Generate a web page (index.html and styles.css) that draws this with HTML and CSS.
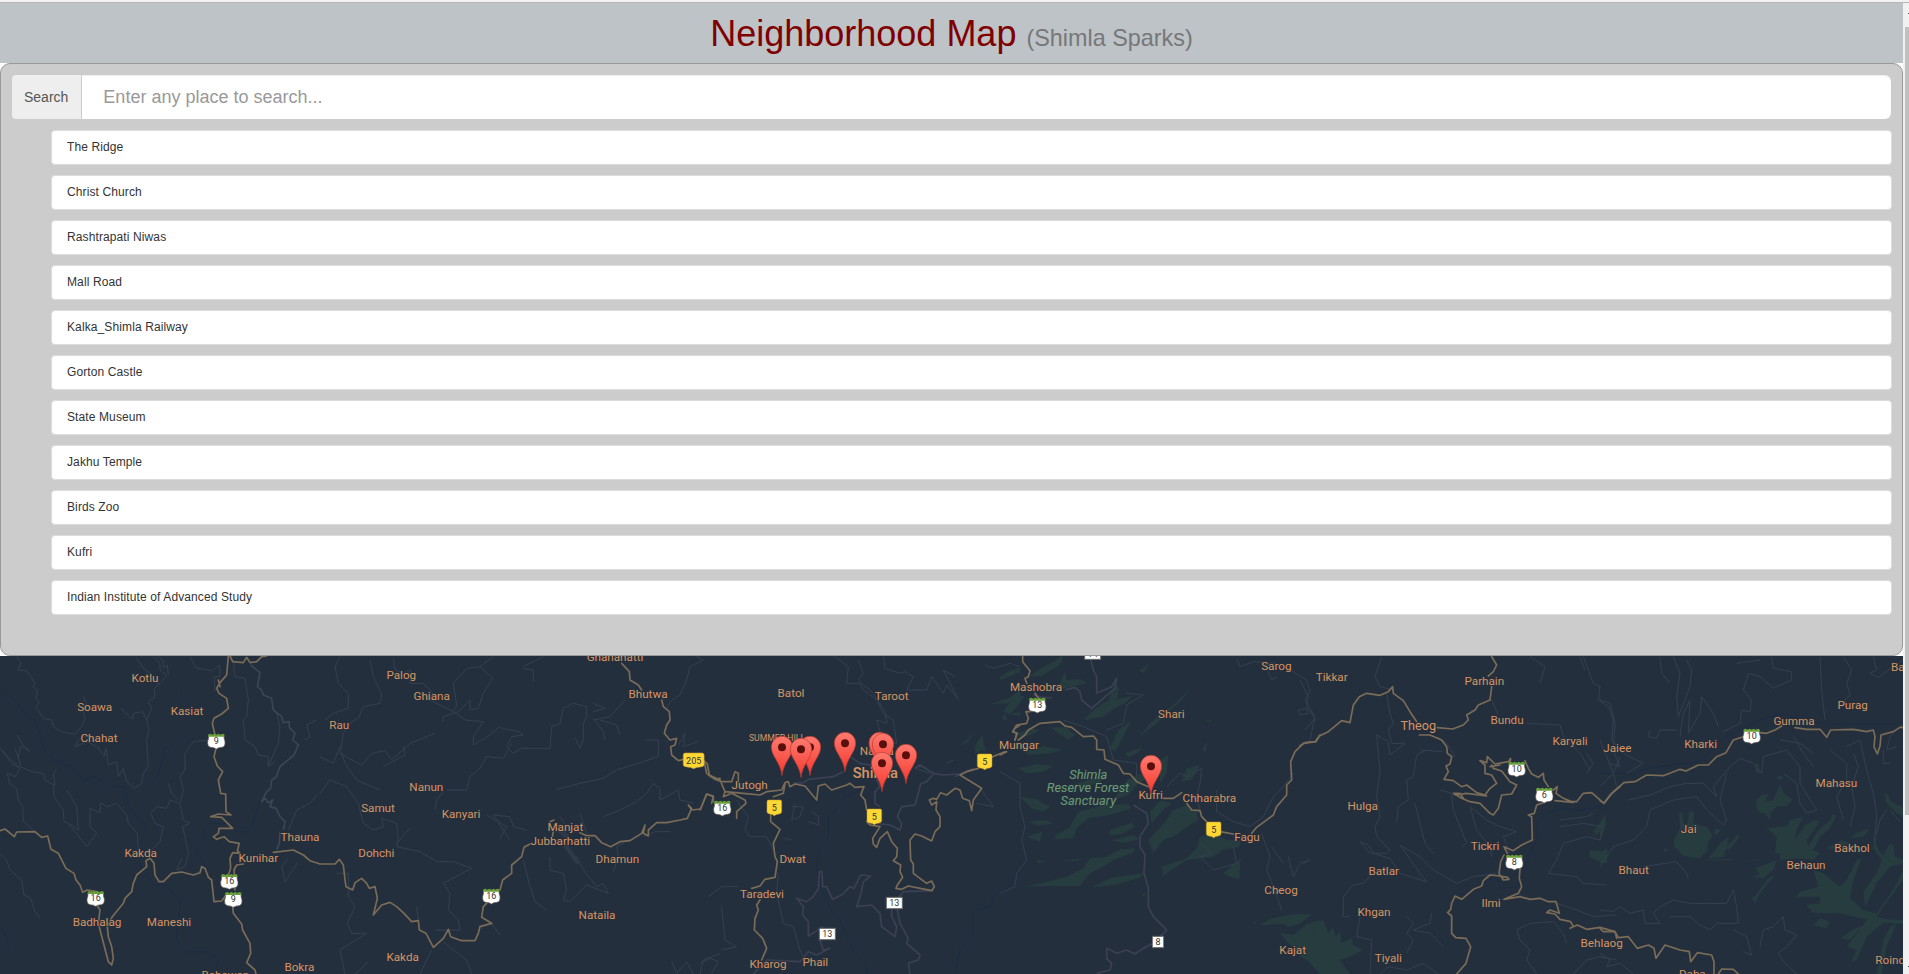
FILE: index.html
```html
<!DOCTYPE html>
<html lang="en">
<head>
<meta charset="utf-8">
<title>Neighborhood Map</title>
<link rel="stylesheet" href="styles.css">
</head>
<body>
<div class="window-edge"></div>
<div class="viewport">
<main class="page">
  <header class="masthead"><h1>Neighborhood Map <small>(Shimla Sparks)</small></h1></header>
  <section class="panel">
    <div class="search">
      <label class="search-label" for="q">Search</label>
      <input class="search-input" id="q" type="text" placeholder="Enter any place to search...">
    </div>
    <ul class="places">
      <li>The Ridge</li>
      <li>Christ Church</li>
      <li>Rashtrapati Niwas</li>
      <li>Mall Road</li>
      <li>Kalka_Shimla Railway</li>
      <li>Gorton Castle</li>
      <li>State Museum</li>
      <li>Jakhu Temple</li>
      <li>Birds Zoo</li>
      <li>Kufri</li>
      <li>Indian Institute of Advanced Study</li>
    </ul>
  </section>
  <div class="map-frame">
  <svg class="map" viewBox="0 48 5709 954" width="1903" height="318">
    <defs>
      <linearGradient id="pinFill" x1="0" y1="0" x2="0" y2="1"><stop offset="0" stop-color="#ff7a6f"/><stop offset="1" stop-color="#f4382e"/></linearGradient>
      <g id="pin"><path class="pin-body" d="M0,0 C-4,-40 -32,-58 -32,-86 A32,32 0 0 1 32,-86 C32,-58 4,-40 0,0Z"/><circle class="pin-dot" cy="-85" r="12"/></g>
      <g id="state"><path class="shield-white" d="M-23,-17 H23 Q22,-8 26,2 Q27,17 17,19 Q6,19 0,24 Q-6,19 -17,19 Q-27,17 -26,2 Q-22,-8 -23,-17Z"/><path class="shield-green" d="M-24,-13 V-20 L-18,-22 L-12,-19 L-6,-22 L0,-19 L6,-22 L12,-19 L18,-22 L24,-20 V-13Z"/></g>
      <g id="national"><path class="shield-yellow" d="M-18,-23 H18 Q22,-22 22,-18 V12 Q22,18 14,19 Q5,20 0,24 Q-5,20 -14,19 Q-22,18 -22,12 V-18 Q-22,-22 -18,-23Z"/></g>
      <g id="district"><rect class="shield-box" x="-24" y="-17" width="48" height="34"/></g>
    </defs>

    <!-- forests -->
    <g class="forest">
      <g transform="translate(2100,0)">
        <path d="M935,92 L960,82 V98 L920,100Z M870,192 L925,175 L960,150 V172 L930,190Z M905,238 L915,218 L920,240Z M925,222 L960,216 V228Z M825,320 L835,300 L848,286 L852,315 L860,335 L845,330 L826,342Z M780,318 L832,270 L800,308Z"/>
      </g>
      <g transform="translate(3000,0)">
        <path d="M0,110 L30,92 L70,84 L35,108 L0,120Z M90,108 L130,80 L165,62 L180,50 H190 L180,75 L150,92 L125,108Z M170,150 L195,95 L200,120 L245,118 L260,130 L225,138Z M10,215 L45,165 L75,168 L55,195 L30,222Z M250,240 L285,205 L325,180 L345,130 L358,145 L350,178 L398,168 L375,190 L345,205 L310,230Z M418,92 L450,70 L430,100Z"/>
        <path d="M330,325 L355,270 L395,240 L370,290 L345,335Z M410,300 L450,250 L520,195 L577,142 L540,185 L500,220 L465,255 L435,275Z M375,340 L425,322 L415,338 L385,352Z M480,360 L505,345 L500,400 L480,430Z M560,385 L600,375 L575,420 L545,425Z M606,330 L622,302 L618,335Z M55,280 L95,265 L120,272 L90,285 L60,290Z M150,262 L200,262 L225,285 L205,300 L175,280Z M615,242 L635,240 L632,246Z"/>
        <path d="M70,335 L130,318 L190,330 L150,340 L90,345Z M55,385 L110,372 L160,378 L130,395 L80,400Z M60,470 L110,478 L150,500 L130,515 L95,505Z M85,545 L140,540 L160,552 L110,556Z M80,590 L128,575 L120,605Z M165,588 L210,560 L235,515 L310,495 L385,492 L395,505 L330,525 L265,535 L230,565 L220,595 L165,598Z M330,570 L395,548 L405,560 L365,582 L330,585Z M340,480 L380,420 L420,402 L455,408 L415,430 L385,465Z M230,430 L300,410 L310,420 L250,445Z"/>
        <path d="M70,740 L130,728 L205,708 L250,685 L270,655 L320,650 L360,628 L405,625 L400,638 L340,660 L310,680 L270,700 L240,738 L150,738Z M275,742 L330,715 L390,705 L435,700 L415,715 L345,735Z M335,602 L400,585 L420,597 L375,608Z M425,765 L437,755 L436,768Z M445,600 L500,540 L520,510 L560,495 L590,515 L595,540 L560,560 L530,585 L490,600 L460,640Z M448,735 L490,705 L485,680 L560,655 L590,625 L600,590 L640,580 L680,600 L722,602 L718,620 L665,630 L640,650 L560,660 L515,690Z M670,700 L722,655 L718,718 L695,712Z M450,515 L480,482 L515,488 L485,515 L455,550Z M110,670 L112,660 L140,664Z M180,665 L240,655 L235,662Z"/>
        <path d="M778,855 L815,835 L880,822 L935,824 L900,850 L868,862 L850,852Z M840,880 L880,885 L920,852 L960,840 V1002 L930,970 L905,935 L870,915Z M760,848 L770,842 L765,855Z"/>
      </g>
      <g transform="translate(3900,0)">
        <path d="M0,822 L35,824 L0,850Z M0,912 L30,890 L50,850 L70,840 L85,880 L98,862 L108,890 L120,870 L124,910 L155,895 L160,915 L190,930 L150,950 L120,960 L150,1002 H60 L30,965 L0,950Z M870,630 L920,635 L922,670 L890,662 L868,650Z M880,575 L918,522 L912,560 L890,585Z"/>
      </g>
      <g transform="translate(4800,0)">
        <path d="M0,550 L15,525 L18,555 L0,600Z M0,640 L22,625 L22,665 L0,670Z M190,630 L200,622 L205,630 L195,637Z M237,520 L248,515 L250,550 L262,552 L268,512 L283,518 L280,550 L320,560 L338,585 L322,615 L325,628 L300,655 L250,648 L222,620 L222,600 L240,565Z M345,568 L362,567 L355,582 L342,582Z M325,655 L365,605 L388,590 L372,650Z M375,625 L415,582 L418,592 L390,628Z M462,770 L510,710 L525,705 L480,760 L466,788 L452,775Z"/>
        <path d="M470,480 L485,465 L505,462 L495,485 L520,480 L540,432 L552,460 L578,480 L560,498 L530,500 L512,520 L510,540 L495,520 L478,518 L468,500Z M465,375 L472,370 L480,400 L470,400Z M530,412 L545,405 L548,418 L530,418Z M500,565 L560,558 L570,540 L610,530 L590,570 L585,600 L615,555 L645,540 L660,545 L620,600 L625,620 L655,570 L690,540 L700,520 L708,528 L690,565 L660,590 L640,630 L660,640 L640,660 L600,655 L540,660 L540,640 L525,640 L530,590Z M465,685 L530,660 L520,690 L490,715 L455,712 L480,702Z M680,625 L725,600 L750,608 L705,630Z M770,578 L810,565 L790,590 L750,595Z M852,458 L865,465 L870,480 L890,495 L909,500 V530 L890,520 L860,490Z"/>
        <path d="M640,690 L670,700 L720,740 L740,720 L770,660 L785,655 L760,720 L750,775 L790,810 L830,820 L885,740 L909,690 V720 L880,760 L850,800 L830,830 L860,838 L909,840 V852 L850,848 L800,890 L770,960 L755,965 L770,930 L740,920 L790,855 L800,838 L760,830 L720,820 L640,818 L618,795 L660,790 L660,770 L600,770 L585,775 L600,755 L655,740Z M790,755 L830,700 L845,660 L820,625 L820,580 L835,630 L850,645 L870,610 L880,615 L885,650 L909,660 V670 L870,680 L830,730 L795,800Z M660,835 L690,845 L680,865 L640,855Z M720,895 L760,868 L790,855 L750,900Z M830,1002 L850,900 L870,860 L890,852 L860,920 L845,1002Z M320,658 H400 V661 H320Z M420,660 H480 V662Z"/>
      </g>
    </g>

    <!-- streams -->
    <g class="stream">
      <path d="M0,140 L20,160 L50,185 L75,225 L105,245 L125,290 L128,320 L160,360 L215,380 L250,420 L285,410 L330,438 L375,440 L385,500 L410,530 L437,560 L430,590 L410,620 L425,690 L460,735 L500,735 L540,785 L535,850 L528,900 L560,935 L620,935 L655,960 L645,1002 M535,290 L520,315 L495,325 L485,365 L468,420 M780,480 L760,545 L745,575 L710,575 L680,550 L620,550 L610,590 L590,635 L615,680 M0,860 L20,890 L28,925 M545,150 L548,185"/>
      <path transform="translate(2100,0)" d="M480,450 L435,470 L410,510 L385,530 L385,590 L355,630 L350,690 L375,770 L400,820 L420,840 L440,890 L455,925 L495,970 L500,1002 M960,695 L930,730 L920,750 L885,765 L870,800 L820,810 L820,880 L780,930 L765,1002"/>
      <path transform="translate(3900,0)" d="M960,440 L900,500 L840,510 L790,505 L740,520 L710,550 L715,590 L690,640 L670,690 L655,740 L600,745 L590,710 L470,770"/>
      <path transform="translate(4800,0)" d="M0,400 L100,400 L140,385 L300,365 L380,290 L480,240 L540,220 L600,235 L680,255 L750,250 L909,250"/>
    </g>

    <!-- local roads -->
    <g class="local">
      <g>
        <path d="M50,50 L62,68 L55,90 L80,92 L105,130 L98,140 L112,150 L108,175 L118,190 L108,200 L130,235 L155,240 L160,260 L185,275 L225,283 L245,260 L255,235 L250,215 L258,190 L250,170 M410,55 L435,90 L450,100 L470,128 L480,135 M460,50 L480,70 L480,90 L500,105 L485,125 L463,145 L465,170 L445,185 L455,205 L440,240 L428,215 L400,220 L398,238 L362,205 M475,50 L490,60 L490,85 L502,75 L505,105 M440,240 L447,270 L440,300 L445,380 L430,400 L425,430 L402,445 L380,425 L370,385 L355,410 L350,365 L325,375 L318,325 L312,350 L292,320 L260,305 L225,320 L235,300 L260,285"/>
        <path d="M52,285 L65,310 L90,335 L62,318 L55,350 L62,380 L95,395 L130,400 L135,420 L165,437 L160,400 L170,388 M0,325 L35,370 L60,385 L5,330 M45,325 L62,375 M60,385 L45,410 L22,400 L28,430 L50,445 L55,480 L68,500 L70,545 L100,570 M160,437 L162,470 L190,510 L192,545 L205,550 L260,620 L275,600 L290,578 L270,560 L270,505 L300,518 L302,488 L320,500 L350,490 L380,525 L385,550 L412,580 L415,640 M0,640 L20,660 L30,690 L65,720 L72,765 L92,775 L105,815 L120,832 M205,550 L235,570 L230,500 L200,450"/>
        <path d="M625,300 L580,305 L555,340 L555,390 L540,410 L550,450 L540,490 L550,540 L570,550 L548,560 L565,640 L555,680 L530,690 L545,655 M540,490 L510,480 L500,505 L470,500 L452,520 L465,550 L490,560 L480,605 L445,640 M505,430 L515,460 L535,480 M570,50 L590,85 L635,92 L660,75 L660,110 L642,110 L645,155 M700,60 L705,110 L735,115 L745,180 L740,230 L730,240 L735,300 L765,320 L775,345 L805,350 L805,378 L835,310 L840,260 L830,220 L815,200 M825,365 L805,380 M915,300 L930,290 L920,255 L950,240 M865,570 L890,510 L930,490 L950,465 M865,655 L845,680 L855,725 L895,665"/>
      </g>
      <g transform="translate(960,0)">
        <path d="M60,50 L45,80 L55,130 L85,160 L85,205 L40,220 L15,240 M150,60 L160,110 L170,130 L185,165 L180,190 L130,200 L115,235 L95,245 L70,280 L62,330 L75,370 L110,420 L180,450 M220,55 L225,90 L250,100 L270,90 L270,130 L310,130 L340,160 L330,180 L400,215 L410,195 L400,130 L440,85 L480,80 L520,50 M480,80 L518,115 L490,160 L475,205 L450,210 L450,180 L415,215 L370,230 L368,245 M400,215 L435,240 L490,245 L460,290 L460,315 L510,285 L535,262 L595,275 L610,285 L575,290 L560,320 L580,340 L605,325 L690,325 L695,260 L720,250 L730,205 L760,190 L800,200 L800,230 L790,250 L790,300 L780,325 L765,293"/>
        <path d="M0,350 L40,370 L60,320 M60,340 L125,375 L155,340 L195,332 L215,360 L270,310 L345,280 M190,380 L255,345 L250,320 M0,460 L30,420 L80,440 L115,490 L130,550 L160,570 L190,560 L185,535 L230,550 L235,600 L230,620 L300,635 L350,665 L400,665 L455,685 L370,730 L390,760 L385,810 L415,840 L420,870 L345,870 M230,610 L270,565 M380,450 L440,450 L450,410 L480,385 L500,350 L550,355 L575,310 M500,525 L560,560 L540,595 M570,600 L520,525 L570,530 L580,560 L620,570 M345,510 L350,480 L370,455"/>
        <path d="M820,240 L870,230 L915,180 M840,240 L890,255 L900,285 M820,235 L850,275 L855,300 M820,190 L855,205 L820,215 M710,448 L780,430 L850,415 L890,390 L970,365 L1015,350 L1015,300 L980,300 M850,530 L900,510 L950,485 L980,460 L1000,430 L1020,445 L1020,480 L1075,450 L1080,480 L1120,490 M1080,165 L1100,120 L1110,80 L1150,60 L1130,50 M1040,205 L1055,180 L1080,165 M1075,315 L1095,280 L1090,320 L1135,305 M610,660 L630,740 L645,785 L680,810 M690,650 L690,690 L730,700 L740,750 L730,780 L750,785 L800,735 L865,760 L850,730 L830,740 L790,690 L770,650 M720,530 L740,560 M780,520 L800,580 M880,695 L895,650 L890,620 L925,600 M970,590 L1005,575 L1050,575 M610,85 L640,90 L640,125 M610,80 L670,50"/>
        <path d="M50,700 L85,700 L85,770 L105,800 L82,850 L95,880 L140,880 L60,930 L75,1002 M105,1002 L145,965 M370,905 L400,930 L440,960 L455,1002 M335,930 L320,960 L300,1002 M515,850 L540,885 M290,800 L295,840 M1055,965 L1070,1000 L1100,965 L1120,1002 M1140,970 L1170,955 L1195,965 L1175,1000"/>
        <path class="airstrip" d="M715,570 L742,590 M735,615 L775,670"/>
      </g>
      <g transform="translate(2100,0)">
        <path d="M405,50 L445,80 L440,130 L480,130 L490,150 L530,180 L550,220 L580,240 L590,310 L560,310 M475,60 L490,100 L475,120 L520,160 L555,215 L560,250 L530,240 L540,275 L525,290 M550,50 L555,85 L600,100 L615,95 L640,110 L620,150 L680,150 L695,110 L730,160 L740,135 L775,178 L730,90 L765,110 M855,75 L880,85 L930,70 L960,80 M740,370 L760,360 M110,480 L130,510 L145,530 L135,570 L150,590 L200,590 L220,630 M275,500 L310,500 L300,530 L275,540 L285,490 M325,545 L355,555 L355,530 L335,515 M250,595 L275,600 M60,940 L10,960 L0,1002 M25,770 L65,740 L115,740 M65,800 L75,900 L110,920 L65,930 M235,700 L230,760 L250,850 L280,860 L300,930 L310,950 M645,385 L690,400 M845,450 L880,500 L830,490"/>
      </g>
      <g transform="translate(3000,0)">
        <path d="M710,55 L720,80 L760,65 L830,70 M870,90 L920,120 L930,155 L915,180 L945,230 L930,300 L900,320 M805,95 L815,120 L830,110 M895,210 L920,205 L925,220 L900,225Z M650,450 L650,515 L700,545 L750,560 L790,530 L820,470 L850,440 L880,400 M500,440 L540,400 L560,410 L605,385 L600,430 L590,470 L600,510 M785,580 L810,650 L800,690 L820,740 L845,810 M815,620 L850,670 M865,650 L880,710 L900,670 L930,660 M600,610 L635,640 L600,650 L640,690 L710,670 L700,620 M190,240 L250,260 L320,290 L340,360 L410,370 L410,410 M0,395 L60,430 L60,500 L75,560 L65,600 L80,660 L50,700 L45,740 L0,760 M380,160 L430,165 L380,195 L370,250 L320,270"/>
      </g>
      <g transform="translate(3900,0)">
        <path d="M245,50 L225,110 L240,140 L280,150 M690,50 L735,80 L720,130 M840,50 L855,90 M850,50 L880,130 L900,140 L895,180 L925,200 L940,240 L935,300 L960,330 M260,160 L270,220 L280,250 L265,270 L275,310 L315,310 L270,345 L265,305 L230,285 L240,390 L230,470 L240,530 L225,560 L230,590 L270,630 L260,640 L210,640 L180,605 L205,615 L220,640 L270,655 L300,700 L380,725 L360,700 L300,615 L360,650 L400,690 L470,730 L520,710 L590,700 M0,120 L25,170 L20,200 L45,235 L15,270 M380,330 L350,345 L340,410 L320,420 L325,480 L295,500 L290,545 M430,335 L360,330 M345,490 L360,550 L375,610 L400,640 M410,290 L440,310 L465,350 M420,450 L455,460 L460,510 L500,610 L485,620 M510,500 L560,540 L600,560 L650,575 L610,590 L630,640 M510,500 L530,570 L570,620 L575,650 M575,180 L595,225 M680,250 L780,255 L790,290 L840,340 L870,390 M860,340 L880,370 L860,400 M900,300 L940,400 L950,440"/>
        <path d="M10,670 L30,660 M225,695 L190,730 L160,735 L130,770 L130,830 L150,830 M180,830 L170,890 L215,900 L210,1002 M320,830 L340,850 L320,880 L340,900 L320,940 M340,870 L390,850 L395,820 M340,870 L390,880 L430,920 M240,1002 L265,980 L320,990 L370,970 L415,1002 M780,540 L860,530 L880,520 M780,560 L850,550 L910,560 L900,600 L860,590 L790,610 L770,660 L745,700 L830,710 L850,730 L920,735 M650,870 L690,850 L760,845 L790,880 L800,910 M650,870 L660,900 L690,930 L680,960 L710,1002 M820,1002 L860,960 L900,950 L950,960 M770,790 L830,810 L880,830 L950,825"/>
      </g>
      <g transform="translate(4800,0)">
        <path d="M180,50 L185,100 L210,130 M220,50 L240,100 L230,170 L235,230 L270,140 L275,90 L260,60 M410,70 L480,60 M515,50 L520,85 L575,95 L575,120 L520,145 L480,110 L445,100 L430,150 L455,180 L450,215 L425,210 L420,250 L370,275 M150,270 L145,290 L170,295 L180,270 L230,270 M240,290 L250,220 L270,180 L265,280 L300,220 L305,170 L340,220 L355,260 M660,50 L665,150 L675,240 M730,50 L755,90 L740,130 L750,165 L735,180 L750,210 M820,50 L830,90 L810,100 L835,112 L909,60 M740,320 L780,300 L800,390 L820,460 L830,520 L825,605 M760,340 L775,380 L755,440 L765,500 L750,560 M690,330 L740,370 L740,420 L710,470 L730,540 M580,290 L610,340 L640,380 M540,300 L600,310 L640,340"/>
        <path d="M85,480 L150,465 L210,440 L260,430 L310,430 L350,470 L340,440 L390,380 L420,355 L460,370 L485,400 L490,350 L560,330 L600,380 L600,430 L650,510 L620,520 L600,490 L590,430 L550,400 M0,680 L40,620 L100,600 L140,560 L150,510 L220,480 L290,470 L320,510 L370,555 L380,540 L360,480 L380,400 M0,440 L40,400 L60,350 M30,190 L45,250 L40,330 L60,380 L30,370 M70,340 L130,370 L80,400 M0,180 L30,190 M850,330 L850,370 L870,370 M870,510 L900,545 M830,580 L840,540 L860,510"/>
        <path d="M130,680 L230,665 L260,700 L265,715 M0,810 L40,815 L60,800 L90,820 L130,810 L135,850 L180,850 L160,820 L180,800 L220,780 L270,790 L320,790 L380,790 L400,750 L410,800 L415,850 L350,850 L330,870 L300,855 L270,830 L210,830 M400,870 L440,890 L455,945 L430,935 M480,920 L490,870 L520,860 L550,830 L555,870 L590,885 L560,920 L535,940 L555,970 L590,1002 M0,940 L30,960 L20,980 L60,970 L100,1002 M909,250 L870,290 L860,330 L890,320"/>
      </g>
    </g>

    <!-- secondary roads -->
    <g class="secondary">
      <path d="M752,75 L780,98 L772,140 L785,150 L790,165 L815,175 L820,210 L845,230 L850,248 L868,245 L868,262 L885,280 L878,300 L895,315 L882,345 L840,380 L828,412 L815,420 L812,445 L800,455 L785,485 L795,475 L805,488 L818,480 L810,500 L828,505 L840,530 L855,545 L850,570 M840,575 L838,610 L830,630"/>
      <g class="purple" transform="translate(2100,0)">
        <path d="M280,430 L310,428 L325,418 L380,412 L400,410 L430,395 M450,350 L480,370 L510,375 L540,440 L525,455 L525,490 L540,500 M645,385 L660,375 L700,400 L730,405 L780,402 L820,385 M700,402 L680,425 L662,432 L655,460 L645,495 L605,500 L592,530 L605,550 L600,570 L570,555 L530,550 M780,402 L765,410 M358,695 L366,695 L368,740 L380,740 L398,778 L425,765 L450,740 L462,745 L482,705 L512,708 L490,725 L482,765 L470,800 L515,795 L540,820 L545,860 L585,890 L590,860 L575,830 L575,800 L610,755 L700,752 M358,695 L355,745 L340,770 L320,785 L290,775 L310,800 L308,825 L325,845 L325,888 L370,860 M360,900 L370,930 L390,925 L350,945 L325,935 L300,965 L200,960 L160,1002 M590,800 L600,850 L625,895 L620,910 L660,945 L655,960 L625,970 L630,1002"/>
      </g>
      <g class="purple" transform="translate(3000,0)">
        <path d="M270,50 L280,90 L290,110 L290,160 L335,140 L350,115 L345,145 L275,205 L245,180 L240,155 L225,142 L195,150 M100,165 L125,172 L155,174 M400,495 L440,520 L445,550 L420,590 L420,620 L435,645 L432,700 L445,745 L445,800 L460,830 L500,870 L480,890 M460,910 L430,925 L405,942 L380,930 L350,940 L320,925 L320,955 L335,970 L330,990 L290,1000"/>
      </g>
    </g>

    <!-- highways -->
    <g class="highway">
      <path d="M685,48 L680,105 L660,128 L650,145 L657,160 L680,175 L685,205 L665,222 L642,235 L637,250 L645,285 M690,48 L698,65 L730,68 L740,52 L750,68 L770,65 L785,50 L800,48 M655,120 L660,140 M648,325 L642,350 L652,378 L668,395 L655,420 L662,460 L677,462 L678,515 L693,525 L655,522 L632,530 L665,532 L698,565 L657,565 L655,580 L640,590 L650,598 L672,590 L688,605 L718,610 L712,632 L720,640 L698,638 L690,655 L692,685 L685,705 M730,672 L710,675 L702,690 L705,750 M698,800 L700,820 L725,852 L728,870 L750,910 L752,940 L740,968 L765,990 L768,1002"/>
      <path d="M0,572 L15,567 L43,590 L50,576 L105,575 L125,592 L143,588 L153,628 L175,640 L198,685 L222,700 L228,720 L240,735 L248,757 L262,750 L290,755 M287,790 L300,810 L295,850 L325,965 L335,975 L340,955 L335,920 L325,890 L322,860 L337,830 L370,790 L375,775 L395,755 L400,730 L410,705 L440,680 L438,662 L450,655 L462,670 L465,705 L477,725 L490,725 L515,700 L545,696 L580,705 L600,698 L605,680 L615,685 L625,712 L635,720 L642,785 L665,783 L680,762 M675,790 L698,790 M820,637 L880,630 L910,645 L930,662 L960,672 L1005,672 L1018,658 L1030,675 L1035,720 L1038,740 L1058,750 L1065,728 L1085,715 L1100,730 L1108,745 L1125,740 L1132,775 L1120,825 L1145,795 L1170,787 L1190,800 L1212,820 L1235,845 L1255,842 L1258,870 L1278,880 L1300,922 L1330,895 L1345,868 L1352,890 L1385,902 L1425,902 L1435,880 L1440,860 L1475,850 L1445,832 L1450,800 L1460,790"/>
      <path transform="translate(960,0)" d="M540,750 L548,720 L575,700 L575,675 L605,650 L612,622 L630,612 M780,578 L800,587 L825,587 L845,608 L872,620 L900,605 L930,602 L965,580 L975,555 L970,580 L985,588 L985,570 L1010,548 L1040,548 L1080,540 L1102,535 L1115,505 L1105,495 L1115,510 L1142,507 L1160,462 L1180,468 L1175,490 M690,545 L702,540 M700,575 L697,590 M905,70 L928,95 L930,120 L955,135 L965,150 M1025,180 L1030,200 L1048,215 L1050,240 L1040,255 L1033,280 L1050,300 L1070,295 L1065,315 L1052,320 L1055,345 L1075,362 L1090,358 M1150,360 L1162,372 L1168,405 L1200,420"/>
      <path transform="translate(2100,0)" d="M12,362 L20,400 L50,420 L65,425 L95,425 L105,395 L115,400 L115,425 M25,405 L45,418 L60,415 M60,420 L75,455 L70,470 L95,460 L135,480 L138,490 L110,515 L110,535 M0,510 L20,462 L40,470 L40,485 M75,455 L130,460 L180,465 L200,455 L245,450 L255,428 L265,425 L270,440 L285,432 L315,438 L350,480 L355,438 L375,432 L395,450 L440,435 L450,430 L465,442 L492,440 L482,465 L495,480 L500,510 M255,430 L250,460 L220,470 M212,525 L212,545 L240,568 L220,610 L225,650 L232,665 L225,712 L195,718 L180,738 L155,745 M180,780 L170,795 L175,810 L165,835 L163,870 L188,895 L200,925 L185,960 M500,545 L510,555 L540,560 L518,595 L520,612 L530,622 L540,595 L562,575 L575,605 L592,625 L590,650 L580,662 L602,675 L600,695 L608,712 L592,735 L588,745 L605,748 L625,738 L695,752 L703,740 L695,723 L680,730 L640,700 L640,672 L632,660 L630,600 L645,582 L665,588 L695,603 L705,575 L720,560 L720,530 L708,510 L710,485 L695,495 L688,480 L700,475 L710,478 L722,458 L740,465 L765,445 L780,450 L788,475 L808,482 L815,512 L820,480 L845,445 L780,405 L800,395 L835,385 M875,352 L890,345 L915,335 M960,255 L945,265 L938,275 L950,280 L945,300"/>
      <path transform="translate(3000,0)" d="M68,50 L68,65 L90,92 L85,110 L75,115 L80,130 M105,160 L115,175 M90,215 L78,215 L85,235 L80,250 L50,255 L38,275 L52,280 L45,300 M55,300 L75,285 L85,270 L120,250 L180,245 L195,258 L215,262 L250,290 L280,288 L290,300 L290,328 L312,330 L315,358 L355,375 L370,400 L390,402 L410,425 L445,440 M490,475 L520,475 L545,458 M560,490 L575,510 L600,512 L605,530 L620,545 M660,575 L700,582 M755,580 L770,562 L820,525 L830,500 L860,465 L860,435 L875,420 L872,365 L885,335 L910,310 L948,305 L960,285 M0,345 L20,335"/>
      <path transform="translate(3900,0)" d="M0,317 L15,308 L45,305 L58,288 L85,275 L125,242 L150,248 L160,195 L178,170 L200,160 L240,166 L265,155 L278,140 L280,160 L310,182 L330,215 L350,245 M412,263 L458,267 L490,255 L505,240 L500,225 L525,210 L535,195 L570,180 L575,140 M575,50 L590,75 L580,95 L565,108 M358,285 L390,285 L425,300 L440,320 L442,340 L455,350 L450,372 L438,378 L445,395 L432,418 L460,422 L485,440 L500,435 L530,458 L555,465 L570,445 L590,430 L575,405 L555,400 L555,375 L540,362 L560,368 L562,350 L585,372 L625,365 L632,355 L630,372 M575,375 L580,385 L605,393 L630,425 L650,435 L635,462 L605,465 L595,505 L580,525 L570,520 L540,490 L510,485 L485,475 L460,460 L480,460 L490,475 M465,465 L500,460 L560,468 M570,380 L600,375 M675,362 L685,385 L695,402 L715,412 L730,400 L732,420 L745,440 M760,450 L772,440 L768,460 L790,475 L820,487 L765,482 M800,485 L830,485 L850,460 L875,458 L912,490 L930,465 L960,440 M730,488 L710,495 L703,520 L685,525 L695,530 L697,600 L665,615 L640,632 L612,620 L622,640 M660,685 L658,715 L665,740 L655,760 L612,778 L660,770 L690,778 L720,775 L745,785 L768,785 L778,820 L750,810 L740,818 L765,822 L780,838 L812,845 L820,860 L810,865 L832,855 L860,868 L900,862 L945,875 L950,895 M612,645 L602,665 L597,700 L610,720 L627,718 L622,712 L600,708 L570,705 L550,722 L545,738 L520,748 L485,778 L465,768 L455,790 L452,808 L443,818 L455,828 L455,880 L467,893 L498,895 L512,920 L498,970 L470,1002"/>
      <path transform="translate(4800,0)" d="M0,482 L12,490 L40,455 L72,428 L105,425 L140,405 L190,407 L240,388 L258,393 L295,375 L325,375 L350,350 L378,338 L400,300 L430,290 M480,278 L500,280 L525,270 L545,258 M585,263 L620,268 L660,268 L680,292 L692,270 L760,268 L800,275 L820,270 L825,290 L822,320 L832,342 L840,318 L843,285 L880,275 L900,262 L909,262 M0,865 L10,875 L45,875 L55,893 L85,890 L112,925 L145,915 L162,925 L168,955 L195,915 L240,930 L268,935 L272,965 L292,938 L335,945 L342,965 L342,1002 M355,1002 L365,987 L400,988 L415,1002"/>
    </g>

    <!-- place names -->
    <g class="label">
      <g><text x="435" y="126">Kotlu</text><text x="284" y="213">Soawa</text><text x="561" y="225">Kasiat</text><text x="297" y="306">Chahat</text><text x="422" y="651">Kakda</text><text x="775" y="666">Kunihar</text><text x="900" y="603">Thauna</text><text x="291" y="859">Badhalag</text><text x="507" y="859">Maneshi</text><text x="898" y="993">Bokra</text><text x="676" y="1018">Bahawan</text></g>
      <g transform="translate(960,0)"><text x="244" y="118">Palog</text><text x="335" y="180">Ghiana</text><text x="58" y="267">Rau</text><text x="319" y="454">Nanun</text><text x="174" y="516">Samut</text><text x="423" y="535">Kanyari</text><text x="169" y="651">Dohchi</text><text x="736" y="574">Manjat</text><text x="721" y="615">Jubbarhatti</text><text x="892" y="669">Dhamun</text><text x="831" y="837">Nataila</text><text x="248" y="963">Kakda</text><text x="885" y="63">Ghanahatti</text><text x="984" y="174">Bhutwa</text></g>
      <g transform="translate(2100,0)"><text x="273" y="171">Batol</text><text x="575" y="180">Taroot</text><text class="caps" x="231" y="302">SUMMER HILL</text><text x="530" y="345">Nabha</text><text class="city" x="526" y="413">Shimla</text><text x="149" y="447">Jutogh</text><text x="278" y="669">Dwat</text><text x="186" y="774">Taradevi</text><text x="204" y="984">Kharog</text><text x="346" y="978">Phail</text></g>
      <g transform="translate(3000,0)"><text x="108" y="153">Mashobra</text><text x="57" y="327">Mungar</text><text x="514" y="234">Shari</text><text x="829" y="90">Sarog</text><text x="628" y="486">Chharabra</text><text x="741" y="603">Fagu</text><text x="843" y="762">Cheog</text><text x="878" y="942">Kajat</text><text x="452" y="477">Kufri</text><text class="park" x="265" y="417">Shimla</text><text class="park" x="264" y="456">Reserve Forest</text><text class="park" x="265" y="495">Sanctuary</text></g>
      <g transform="translate(3900,0)"><text x="95" y="123">Tikkar</text><text x="553" y="135">Parhain</text><text class="town" x="355" y="270">Theog</text><text x="621" y="252">Bundu</text><text x="810" y="315">Karyali</text><text x="188" y="510">Hulga</text><text x="555" y="630">Tickri</text><text x="251" y="705">Batlar</text><text x="573" y="801">Ilmi</text><text x="222" y="828">Khgan</text><text x="265" y="966">Tiyali</text><text x="905" y="921">Behlaog</text></g>
      <g transform="translate(4800,0)"><text x="52" y="336">Jaiee</text><text x="302" y="324">Kharki</text><text x="582" y="255">Gumma</text><text x="758" y="207">Purag</text><text x="709" y="441">Mahasu</text><text x="266" y="579">Jai</text><text x="756" y="636">Bakhol</text><text x="618" y="687">Behaun</text><text x="101" y="702">Bhaut</text><text class="start" x="873" y="93">Bagi</text><text class="start" x="826" y="972">Roindi</text><text x="277" y="1014">Daha</text></g>
    </g>

    <!-- route shields -->
    <g class="route">
      <g transform="translate(649,303)"><use href="#state"/><text y="9">9</text></g>
      <g transform="translate(688,724)"><use href="#state"/><text y="9">16</text></g>
      <g transform="translate(700,778)"><use href="#state"/><text y="9">9</text></g>
      <g transform="translate(287,775)"><use href="#state"/><text y="9">16</text></g>
      <g transform="translate(1474,768)"><use href="#state"/><text y="9">16</text></g>
      <g transform="translate(2167,504)"><use href="#state"/><text y="9">16</text></g>
      <g transform="translate(3112,195)"><use href="#state"/><text y="9">13</text></g>
      <g transform="translate(4550,387)"><use href="#state"/><text y="9">10</text></g>
      <g transform="translate(4633,465)"><use href="#state"/><text y="9">6</text></g>
      <g transform="translate(4543,666)"><use href="#state"/><text y="9">8</text></g>
      <g transform="translate(5255,288)"><use href="#state"/><text y="9">10</text></g>
      <g transform="translate(2081,362)"><use href="#national" transform="scale(1.42,1)"/><text y="10">205</text></g>
      <g transform="translate(2323,503)"><use href="#national"/><text y="10">5</text></g>
      <g transform="translate(2623,530)"><use href="#national"/><text y="10">5</text></g>
      <g transform="translate(2954,365)"><use href="#national"/><text y="10">5</text></g>
      <g transform="translate(3641,569)"><use href="#national"/><text y="10">5</text></g>
      <g transform="translate(2683,789)"><use href="#district"/><text y="9">13</text></g>
      <g transform="translate(2482,882)"><use href="#district"/><text y="9">13</text></g>
      <g transform="translate(3278,41)"><use href="#district"/><text y="9">14</text></g>
      <g transform="translate(3474,906)"><use href="#district" transform="scale(.7,1)"/><text y="9">8</text></g>
    </g>

    <!-- markers -->
    <use href="#pin" x="2430" y="407"/>
    <use href="#pin" x="2346" y="407"/>
    <use href="#pin" x="2535" y="395"/>
    <use href="#pin" x="2639" y="395"/>
    <use href="#pin" x="2649" y="398"/>
    <use href="#pin" x="2403" y="413"/>
    <use href="#pin" x="2718" y="431"/>
    <use href="#pin" x="2646" y="455"/>
    <use href="#pin" x="3453" y="464"/>
  </svg>
  </div>
</main>
<div class="scrollbar"><div class="arrow"></div><div class="thumb"></div><div class="arrow arrow-end"></div></div>
</div>
</body>
</html>
```
FILE: styles.css
```css
* { box-sizing: border-box; }
body { margin: 0; height: 974px; overflow: hidden; display: flex; flex-direction: column; background: #fff; font-family: "Liberation Sans", Arial, sans-serif; color: #333; }
.window-edge { height: 3px; flex: none; background: #f2f2f2; border-bottom: 1px solid #b9b5b8; }
.viewport { flex: 1; display: flex; min-height: 0; }
.page { width: 1903px; flex: none; display: flex; flex-direction: column; }
.masthead { height: 60px; flex: none; background: #bdc3c7; text-align: center; }
.masthead h1 { margin: 0; padding-top: 11px; font-size: 36px; font-weight: 400; line-height: 40px; color: #800000; }
.masthead small { font-size: 23.4px; color: #777; }
.panel { height: 593px; flex: none; padding: 11px 10px 0 11px; border: 1px solid #999; border-radius: 10px; background: #ccc; }
.search { display: flex; height: 44px; margin-right: 1px; }
.search-label { display: flex; align-items: center; padding: 0 13px 0 12px; font-size: 14px; color: #555; background: #eee; border-right: 1px solid #ccc; border-radius: 4px 0 0 4px; }
.search-input { flex: 1; min-width: 0; padding: 0 21px; border: 0; border-radius: 0 6px 6px 0; background: #fff; box-shadow: inset 0 1px 1px rgba(0,0,0,.075); font: 18px "Liberation Sans", Arial, sans-serif; color: #555; }
.search-input::placeholder { color: #999; opacity: 1; }
.places { list-style: none; margin: 11px 0 0 39px; padding: 0; display: grid; gap: 10px; }
.places li { height: 35px; padding: 0 15px; border: 1px solid #ddd; border-radius: 4px; background: #fff; font-size: 12px; line-height: 32px; letter-spacing: .11px; }
.map-frame { flex: none; height: 318px; background: #242f3e; overflow: hidden; }
.map { display: block; }
.forest path { fill: #263c3f; }
.stream path { fill: none; stroke: #1c2c43; stroke-width: 3; stroke-linejoin: round; }
.local path { fill: none; stroke: #344050; stroke-width: 3; stroke-linejoin: round; }
.local .airstrip { stroke: #2f3948; stroke-width: 14; }
.secondary path { fill: none; stroke: #3a4655; stroke-width: 5; stroke-linejoin: round; }
.secondary .purple path { stroke: #3b4053; }
.highway path { fill: none; stroke: #7a6c57; stroke-width: 5; stroke-linejoin: round; stroke-linecap: round; }
.label { font-family: Roboto, sans-serif; font-size: 35px; fill: #d59563; text-anchor: middle; paint-order: stroke; stroke: #242f3e; stroke-width: 4px; stroke-linejoin: round; }
.label .start { text-anchor: start; }
.label .caps { font-size: 26px; }
.label .city { font-size: 44px; font-weight: 500; }
.label .town { font-size: 38px; }
.label .park { font-size: 38.5px; font-style: italic; fill: #6b9a76; stroke: #263c3f; stroke-width: 2px; }
.route { font-family: Roboto, sans-serif; font-size: 27px; fill: #333; text-anchor: middle; }
.shield-white { fill: #fff; stroke: #655e58; stroke-width: 2; }
.shield-green { fill: #689f38; }
.shield-yellow { fill: #fdd835; stroke: #c79a2b; stroke-width: 1.5; }
.shield-box { fill: #fff; stroke: #666; stroke-width: 3; }
.pin-body { fill: url(#pinFill); stroke: #b5392f; stroke-width: 2; }
.pin-dot { fill: #590f0b; }
.scrollbar { flex: 1; display: flex; flex-direction: column; align-items: flex-end; background: #f1f1f1; }
.arrow { width: 1px; height: 1px; margin-top: 10px; background: #505050; }
.thumb { width: 4px; height: 788px; margin-top: 13px; background: #c1c1c1; }
.arrow-end { margin-top: 151px; }
```
